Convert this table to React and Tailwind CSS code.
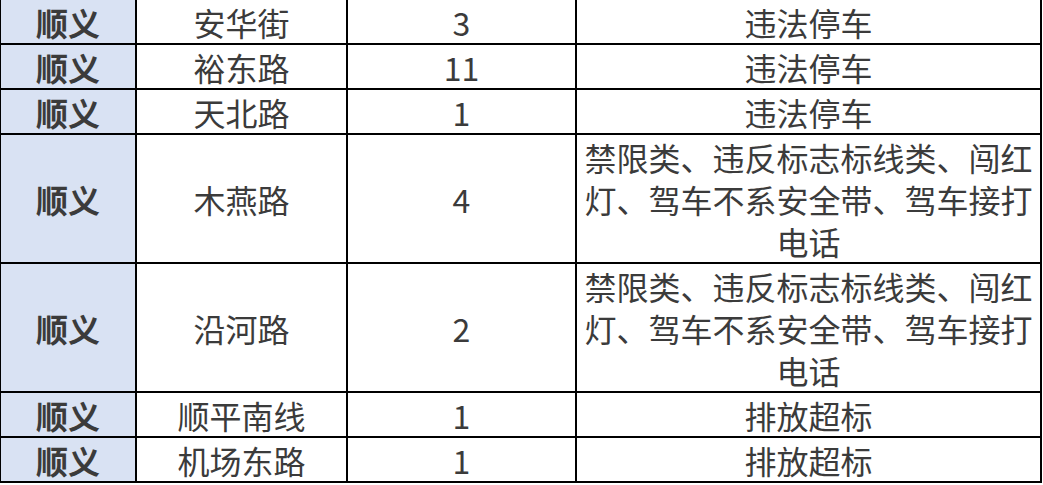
import React from "react";

const rows = [
  { area: "顺义", road: "安华街", count: "3", type: "违法停车" },
  { area: "顺义", road: "裕东路", count: "11", type: "违法停车" },
  { area: "顺义", road: "天北路", count: "1", type: "违法停车" },
  {
    area: "顺义",
    road: "木燕路",
    count: "4",
    type: "禁限类、违反标志标线类、闯红灯、驾车不系安全带、驾车接打电话",
    tall: true,
  },
  {
    area: "顺义",
    road: "沿河路",
    count: "2",
    type: "禁限类、违反标志标线类、闯红灯、驾车不系安全带、驾车接打电话",
    tall: true,
  },
  { area: "顺义", road: "顺平南线", count: "1", type: "排放超标" },
  { area: "顺义", road: "机场东路", count: "1", type: "排放超标" },
];

export default function App() {
  return (
    <div
      className="w-[1043px] h-[485px] overflow-hidden bg-white text-[#3b3b3b]"
      style={{ fontFamily: '"Noto Sans CJK SC", "Noto Sans", sans-serif' }}
    >
      <table className="table-fixed border-separate border-spacing-0 w-[1042px] -mt-[2px] text-[32px] leading-[42px]">
        <colgroup>
          <col className="w-[137px]" />
          <col className="w-[211px]" />
          <col className="w-[229px]" />
          <col className="w-[465px]" />
        </colgroup>
        <tbody>
          {rows.map((r, i) => {
            const top = i === 0 ? "border-t-2" : "";
            const h = r.tall ? "h-[129px]" : i === 0 ? "h-[47px]" : "h-[45px]";
            return (
              <tr key={i} className={h}>
                <td className={`${top} border-l border-b-2 border-r-2 border-black bg-[#d9e2f3] text-center font-bold align-middle p-0`}>
                  {r.area}
                </td>
                <td className={`${top} border-b-2 border-r-2 border-black text-center align-middle p-0`}>
                  {r.road}
                </td>
                <td className={`${top} border-b-2 border-r-2 border-black text-center align-middle p-0`}>
                  {r.count}
                </td>
                <td className={`${top} border-b-2 border-r-2 border-black text-center align-middle px-[4px] py-0`}>
                  {r.type}
                </td>
              </tr>
            );
          })}
        </tbody>
      </table>
    </div>
  );
}
